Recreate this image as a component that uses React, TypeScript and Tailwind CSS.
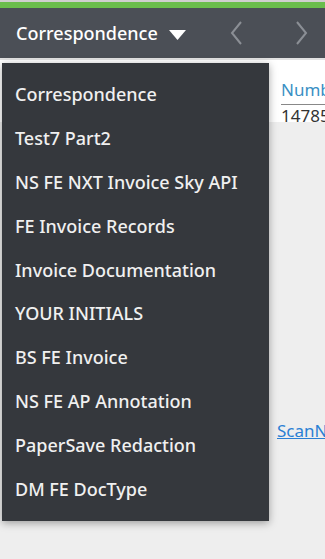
import React from "react";

const items = [
  "Correspondence",
  "Test7 Part2",
  "NS FE NXT Invoice Sky API",
  "FE Invoice Records",
  "Invoice Documentation",
  "YOUR INITIALS",
  "BS FE Invoice",
  "NS FE AP Annotation",
  "PaperSave Redaction",
  "DM FE DocType",
];

export default function App() {
  return (
    <div
      className="relative w-[325px] h-[559px] overflow-hidden bg-[#eeeeee]"
      style={{ fontFamily: '"Noto Sans", "Open Sans", sans-serif' }}
    >
      <div className="h-[2px] bg-[#cfcfcf]" />
      <div className="h-[6px] bg-[#6abd4c]" />
      <header className="h-[50px] bg-[#4b4f56] flex items-center">
        <span className="ml-[16px] text-[18px] font-medium text-white leading-none">
          Correspondence
        </span>
        <svg width="17" height="11" viewBox="0 0 17 11" className="ml-[11px] mt-[4px]">
          <path d="M0 0 L17 0 L8.5 10 Z" fill="#ffffff" />
        </svg>
        <svg width="13" height="24" viewBox="0 0 13 24" className="ml-[44px]">
          <path d="M11 1 L2 12 L11 23" fill="none" stroke="#8b8f95" strokeWidth="2" />
        </svg>
        <svg width="13" height="24" viewBox="0 0 13 24" className="ml-[52px]">
          <path d="M2 1 L11 12 L2 23" fill="none" stroke="#8b8f95" strokeWidth="2" />
        </svg>
      </header>
      <div className="h-[2px] bg-[#e2e2e2]" />
      <div className="bg-white h-[62px] pl-[281px] pt-[20px]">
        <div className="text-[17px] text-[#3a8fc4] leading-[20px] border-b border-[#888] w-max pr-4 pb-[4px]">
          Number
        </div>
        <div className="text-[17px] text-[#333] leading-[20px] mt-[1px]">14785</div>
      </div>
      <div className="pl-[277px] pt-[296px]">
        <span className="text-[17px] text-[#2a7fd4] underline">ScanNumber</span>
      </div>

      <div className="absolute left-[2px] top-[63px] w-[267px] bg-[#35383d] py-[10px] shadow-[0_2px_8px_rgba(0,0,0,0.35)]">
        {items.map((t) => (
          <div
            key={t}
            className="h-[43.8px] flex items-center pl-[13px] text-[18px] font-medium text-[#f0f0f0] whitespace-nowrap"
          >
            {t}
          </div>
        ))}
      </div>
    </div>
  );
}
